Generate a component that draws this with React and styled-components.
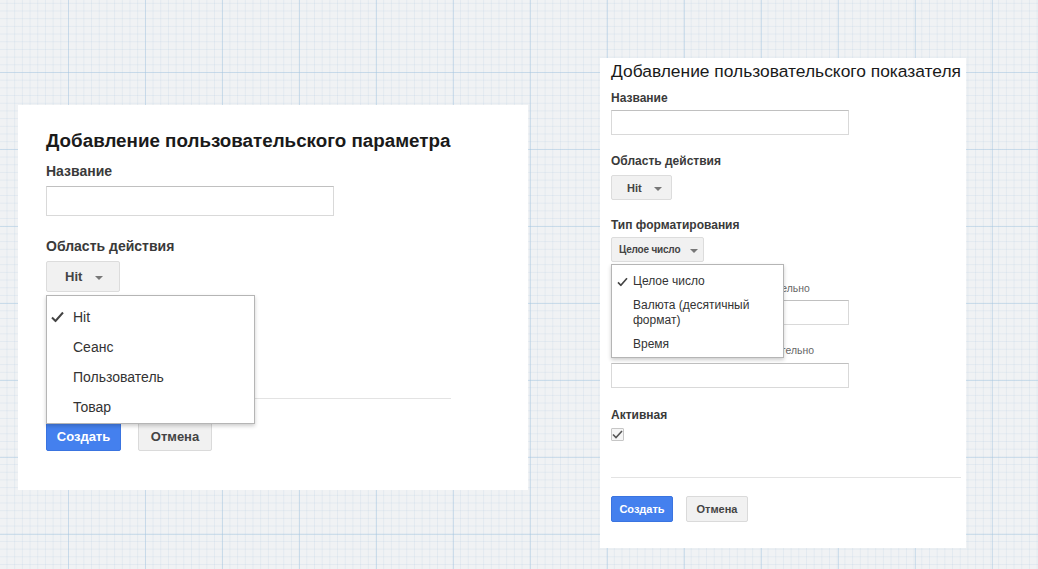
import React from 'react'
import styled, { createGlobalStyle } from 'styled-components'

const GlobalStyle = createGlobalStyle`
  html, body {
    margin: 0;
    padding: 0;
  }
  body {
    font-family: "Liberation Sans", Arial, sans-serif;
    background-color: #f0f2f4;
    background-image:
      linear-gradient(to right, rgba(165, 198, 224, 0.45) 1px, transparent 1px),
      linear-gradient(to bottom, rgba(165, 198, 224, 0.45) 1px, transparent 1px),
      linear-gradient(to right, rgba(180, 204, 224, 0.22) 1px, transparent 1px),
      linear-gradient(to bottom, rgba(180, 204, 224, 0.22) 1px, transparent 1px);
    background-size: 77px 77px, 77px 77px, 7.7px 7.7px, 7.7px 7.7px;
    background-position: 68px 72px, 68px 72px, 68px 72px, 68px 72px;
  }
`

const leftItems = ['Hit', 'Сеанс', 'Пользователь', 'Товар']
const rightItems = ['Целое число', 'Валюта (десятичный формат)', 'Время']

const App = () => (
  <>
    <GlobalStyle />
    <Page>
      <Panel $w={510} $h={385} $top={105} $pad="24px 77px 0 28px">
        <Title $size={18.8} $bold>Добавление пользовательского параметра</Title>
        <Label $size={14} $mt={11}>Название</Label>
        <Input $w={288} $h={30} $mt={6} />
        <Label $size={14} $mt={22}>Область действия</Label>
        <SelectWrap $mt={6}>
          <Select $w={74} $h={31} $size={13} $padL={18}>
            Hit
            <Caret $ml={13} />
          </Select>
          <Menu $w={209} $gap={3} $padT={6} $padB={1}>
            {leftItems.map((item, i) => (
              <MenuItem key={item} $size={14} $h={30} $padL={26} $padR={14}>
                {i === 0 && <Check $left={4} $w={13} $h={11} />}
                {item}
              </MenuItem>
            ))}
          </Menu>
        </SelectWrap>
        <Divider $mt={106} />
        <Actions $gap={17} $mt={23}>
          <Button $primary $w={75} $h={29} $size={13}>Создать</Button>
          <Button $w={74} $h={29} $size={13}>Отмена</Button>
        </Actions>
      </Panel>

      <Panel $w={366} $h={490} $top={58} $ml={72} $pad="3px 5px 0 11px">
        <Title $size={17.4}>Добавление пользовательского показателя</Title>
        <Label $size={12} $mt={9}>Название</Label>
        <Input $w={238} $h={25} $mt={4} />
        <Label $size={12} $mt={19}>Область действия</Label>
        <SelectWrap $mt={6}>
          <Select $w={61} $h={25} $size={11} $padL={15}>
            Hit
            <Caret $ml={12} />
          </Select>
        </SelectWrap>
        <Label $size={12} $mt={18}>Тип форматирования</Label>
        <SelectWrap $mt={4}>
          <Select $w={93} $h={25} $size={10} $padL={7} $tight>
            Целое число
            <Caret $ml={10} />
          </Select>
          <Menu $w={173} $gap={2} $padT={5} $padB={0}>
            {rightItems.map((item, i) => (
              <MenuItem key={item} $size={12} $lh={15} $pt={4} $pb={5} $padL={21} $padR={20}>
                {i === 0 && <Check $left={5} $w={11} $h={9} />}
                {item}
              </MenuItem>
            ))}
          </Menu>
        </SelectWrap>
        <Hint $mt={21}>Минимальное значение – необязательно</Hint>
        <Input $w={238} $h={25} $mt={5} />
        <Hint $mt={20}>Максимальное значение – необязательно</Hint>
        <Input $w={238} $h={25} $mt={6} />
        <Label $size={12} $mt={20}>Активная</Label>
        <Checkbox $mt={5}>
          <svg width="11" height="9" viewBox="0 0 11 9">
            <polyline points="1,4.5 4,7.5 10,1" fill="none" stroke="#555" strokeWidth="1.6" />
          </svg>
        </Checkbox>
        <Divider $mt={36} />
        <Actions $gap={13} $mt={18}>
          <Button $primary $w={62} $h={26} $size={11}>Создать</Button>
          <Button $w={62} $h={26} $size={11}>Отмена</Button>
        </Actions>
      </Panel>
    </Page>
  </>
)

const Check = ({ $left, $w, $h }) => (
  <CheckMark $left={$left} width={$w} height={$h} viewBox="0 0 13 11">
    <polyline points="1,6 4.5,9.5 12,1" fill="none" stroke="#444" strokeWidth="2" />
  </CheckMark>
)

export default App

const Page = styled.div`
  display: flex;
  align-items: flex-start;
  padding-left: 18px;
  height: 569px;
  box-sizing: border-box;
  overflow: hidden;
`

const Panel = styled.section`
  display: flex;
  flex-direction: column;
  align-items: flex-start;
  flex: none;
  width: ${p => p.$w}px;
  height: ${p => p.$h}px;
  margin-top: ${p => p.$top}px;
  margin-left: ${p => p.$ml || 0}px;
  padding: ${p => p.$pad};
  box-sizing: border-box;
  background: #fff;
  color: #333;
`

const Title = styled.h2`
  margin: 0;
  font-size: ${p => p.$size}px;
  line-height: ${p => Math.round(p.$size + 4)}px;
  font-weight: ${p => (p.$bold ? 700 : 400)};
  color: #1a1a1a;
  white-space: nowrap;
`

const Label = styled.div`
  margin-top: ${p => p.$mt}px;
  font-size: ${p => p.$size}px;
  line-height: ${p => p.$size + 3}px;
  font-weight: 700;
  color: #3a3a3a;
`

const Hint = styled.div`
  margin-top: ${p => p.$mt}px;
  font-size: 10.4px;
  line-height: 12px;
  color: #666;
  white-space: nowrap;
`

const Input = styled.div`
  margin-top: ${p => p.$mt}px;
  width: ${p => p.$w}px;
  height: ${p => p.$h}px;
  box-sizing: border-box;
  border: 1px solid #d9d9d9;
  border-top-color: #c0c0c0;
  background: #fff;
`

const SelectWrap = styled.div`
  position: relative;
  margin-top: ${p => p.$mt}px;
`

const Select = styled.div`
  display: flex;
  align-items: center;
  width: ${p => p.$w}px;
  height: ${p => p.$h}px;
  padding-left: ${p => p.$padL}px;
  box-sizing: border-box;
  border: 1px solid #dcdcdc;
  border-radius: 2px;
  background: #f1f1f1;
  font-size: ${p => p.$size}px;
  font-weight: 700;
  letter-spacing: ${p => (p.$tight ? '-0.2px' : 'normal')};
  color: #444;
  white-space: nowrap;
`

const Caret = styled.span`
  flex: none;
  margin-left: ${p => p.$ml}px;
  margin-top: 2px;
  width: 0;
  height: 0;
  border-left: 4px solid transparent;
  border-right: 4px solid transparent;
  border-top: 4px solid #777;
`

const Menu = styled.ul`
  position: absolute;
  left: 0;
  top: calc(100% + ${p => p.$gap}px);
  z-index: 2;
  width: ${p => p.$w}px;
  margin: 0;
  padding: ${p => p.$padT}px 0 ${p => p.$padB}px;
  box-sizing: border-box;
  list-style: none;
  background: #fff;
  border: 1px solid #b5b5b5;
  box-shadow: 0 2px 4px rgba(0, 0, 0, 0.2);
`

const MenuItem = styled.li`
  position: relative;
  display: flex;
  align-items: center;
  ${p => (p.$h ? `height: ${p.$h}px;` : `padding-top: ${p.$pt}px; padding-bottom: ${p.$pb}px;`)}
  padding-left: ${p => p.$padL}px;
  padding-right: ${p => p.$padR}px;
  font-size: ${p => p.$size}px;
  line-height: ${p => p.$lh || p.$size + 4}px;
  color: #333;
`

const CheckMark = styled.svg`
  position: absolute;
  left: ${p => p.$left}px;
  top: 50%;
  transform: translateY(-50%);
`

const Checkbox = styled.div`
  display: flex;
  align-items: center;
  justify-content: center;
  margin-top: ${p => p.$mt}px;
  width: 13px;
  height: 13px;
  box-sizing: border-box;
  border: 1px solid #c6c6c6;
  border-radius: 1px;
  background: #f5f5f5;
`

const Divider = styled.hr`
  align-self: stretch;
  margin: ${p => p.$mt}px 0 0;
  border: 0;
  border-top: 1px solid #e3e3e3;
`

const Actions = styled.div`
  display: flex;
  gap: ${p => p.$gap}px;
  margin-top: ${p => p.$mt}px;
`

const Button = styled.button`
  width: ${p => p.$w}px;
  height: ${p => p.$h}px;
  padding: 0;
  box-sizing: border-box;
  border-radius: 2px;
  font-family: inherit;
  font-size: ${p => p.$size}px;
  font-weight: 700;
  color: ${p => (p.$primary ? '#fff' : '#444')};
  background: ${p => (p.$primary ? '#4480ee' : '#f1f1f1')};
  border: 1px solid ${p => (p.$primary ? '#3a74e0' : '#dadada')};
`
